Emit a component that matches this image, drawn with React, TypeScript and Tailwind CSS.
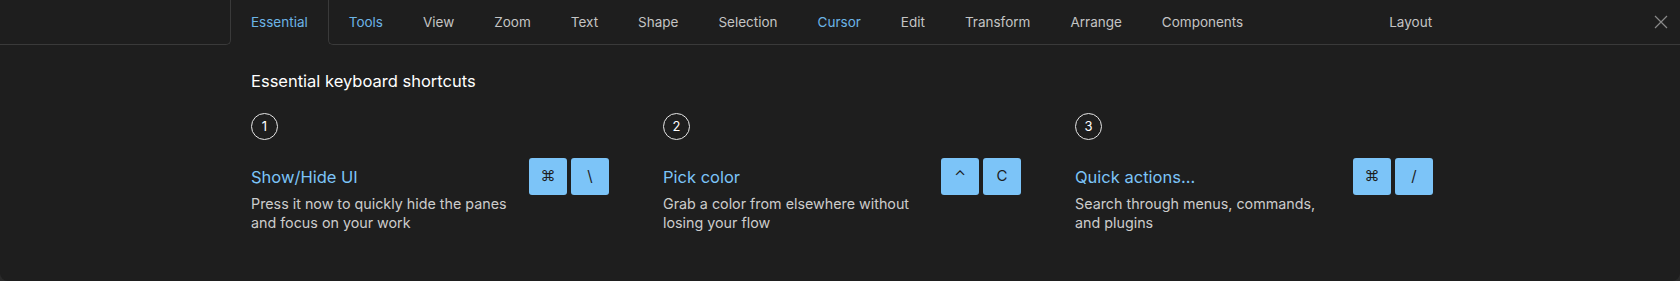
import React from 'react';

const tabs = [
  { label: 'Tools', blue: true },
  { label: 'View' },
  { label: 'Zoom' },
  { label: 'Text' },
  { label: 'Shape' },
  { label: 'Selection' },
  { label: 'Cursor', blue: true },
  { label: 'Edit' },
  { label: 'Transform' },
  { label: 'Arrange' },
  { label: 'Components' },
];

const shortcuts = [
  {
    n: 1,
    title: 'Show/Hide UI',
    desc: 'Press it now to quickly hide the panes and focus on your work',
    keys: ['⌘', '\\'],
  },
  {
    n: 2,
    title: 'Pick color',
    desc: 'Grab a color from elsewhere without losing your flow',
    keys: ['⌃', 'C'],
  },
  {
    n: 3,
    title: 'Quick actions...',
    desc: 'Search through menus, commands, and plugins',
    keys: ['⌘', '/'],
  },
];

function Key({ k }: { k: string }) {
  return (
    <div className="w-[38px] h-[37px] rounded-[3px] bg-[#7cc4f8] flex items-center justify-center text-[15px] text-[#1e1e1e] font-['Inter','DejaVu_Sans',sans-serif]">
      {k}
    </div>
  );
}

export default function App() {
  return (
    <div className="w-[1680px] h-[281px] bg-[#2a2a2a] font-['Inter','Noto_Sans',sans-serif]">
      <div className="h-full bg-[#1e1e1e] rounded-b-[8px] overflow-hidden">
        {/* Tab bar */}
        <div className="flex h-[45px]">
          <div className="w-[231px] border-b border-r border-[#3a3a3a] rounded-br-[5px]" />
          <div className="px-5 flex items-center text-[13.5px] text-[#6cb4e6]">Essential</div>
          <div className="flex-1 flex items-center border-b border-l border-[#3a3a3a] rounded-bl-[5px]">
            {tabs.map((t) => (
              <div
                key={t.label}
                className={`px-5 text-[13.5px] ${t.blue ? 'text-[#6cb4e6]' : 'text-[#c4c4c4]'}`}
              >
                {t.label}
              </div>
            ))}
            <div className="ml-[106px] px-5 text-[13.5px] text-[#c4c4c4]">Layout</div>
            <div className="flex-1" />
            <button className="w-[38px] h-full flex items-center justify-center">
              <svg width="14" height="14" viewBox="0 0 14 14" fill="none">
                <path d="M1 1L13 13M13 1L1 13" stroke="#8a8a8a" strokeWidth="1.2" />
              </svg>
            </button>
          </div>
        </div>

        {/* Content */}
        <div className="pl-[251px] pt-[26px]">
          <h2 className="text-[16.5px] leading-[20px] text-white">Essential keyboard shortcuts</h2>
          <div className="flex gap-[54px] mt-[22px]">
            {shortcuts.map((s) => (
              <div key={s.n} className="w-[358px]">
                <div className="w-[27px] h-[27px] rounded-full border-[1.5px] border-[#e6e6e6] flex items-center justify-center text-[13px] text-white">
                  {s.n}
                </div>
                <div className="flex justify-between items-start mt-[18px]">
                  <div className="pt-[7px]">
                    <div className="text-[16.5px] leading-[24px] text-[#7cc4f8]">{s.title}</div>
                    <p className="mt-[5px] w-[268px] text-[14.3px] leading-[19px] text-[#cccccc]">{s.desc}</p>
                  </div>
                  <div className="flex gap-1">
                    {s.keys.map((k) => (
                      <Key key={k} k={k} />
                    ))}
                  </div>
                </div>
              </div>
            ))}
          </div>
        </div>
      </div>
    </div>
  );
}
